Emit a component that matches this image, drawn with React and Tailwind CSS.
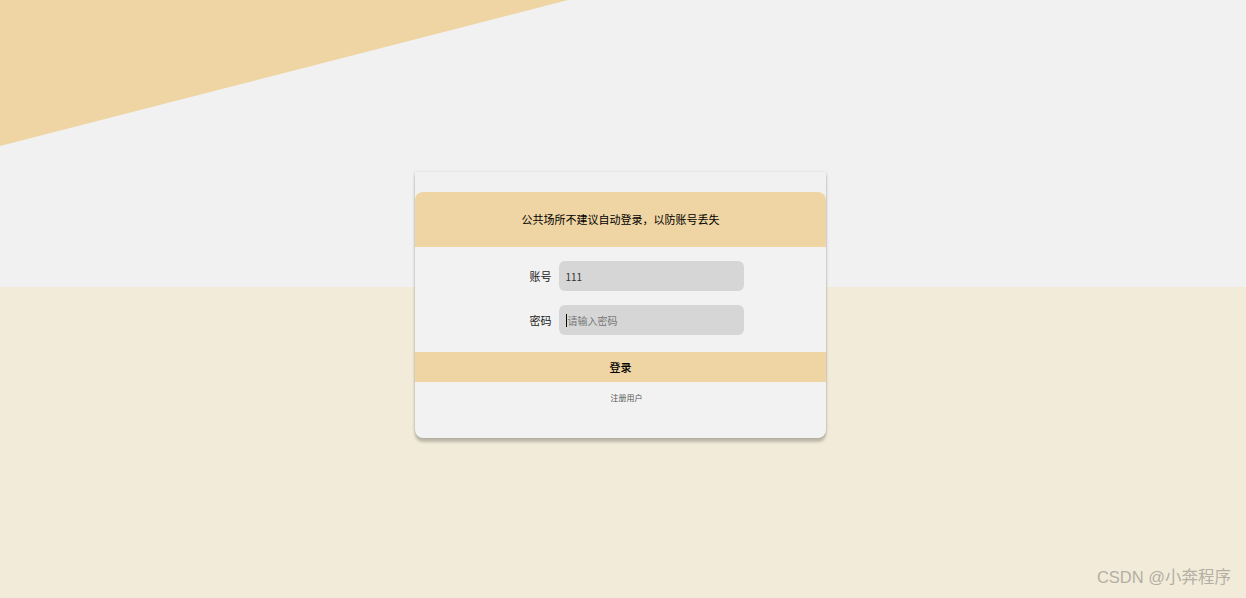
export default function App() {
    return (
        <div
            className="relative w-full h-[598px] overflow-hidden bg-[linear-gradient(to_bottom,#f1f1f1_287px,#f2ebd9_287px)]"
            style={{ fontFamily: '"Noto Sans CJK SC", "Liberation Sans", sans-serif' }}
        >
            {/* top-left wedge */}
            <svg className="absolute left-0 top-0" width="570" height="148" viewBox="0 0 570 148">
                <polygon points="0,0 568,0 0,146" fill="#efd5a3" />
            </svg>

            <div className="relative pt-[172px] pl-[415px]">
                <div className="w-[411px] h-[266px] bg-[#f2f2f2] rounded-b-lg shadow-[0_4px_3px_rgba(0,0,0,0.22),1px_0_2px_rgba(0,0,0,0.08),-1px_0_2px_rgba(0,0,0,0.08)]">
                    <div className="h-[20px] bg-[#f1f1f1]" />
                    <div className="h-[55px] bg-[#efd5a3] rounded-t-lg flex items-center justify-center text-[11px] text-black">
                        公共场所不建议自动登录，以防账号丢失
                    </div>

                    <div className="flex flex-col items-center gap-[14px] pt-[14px] pl-[24px]">
                        <div className="flex items-center gap-[7px]">
                            <span className="w-[30px] text-right text-[11px] text-[#222]">账号</span>
                            <div className="w-[185px] h-[30px] rounded-md bg-[#d6d6d6] flex items-center px-[7px] text-[10px] text-[#333]">111</div>
                        </div>
                        <div className="flex items-center gap-[7px]">
                            <span className="w-[30px] text-right text-[11px] text-[#222]">密码</span>
                            <div className="w-[185px] h-[30px] rounded-md bg-[#d6d6d6] flex items-center px-[7px] text-[10px] text-[#777]">
                                <span className="w-px h-[13px] bg-black mr-px" />
                                请输入密码
                            </div>
                        </div>
                    </div>

                    <div className="mt-[17px] h-[30px] bg-[#efd5a3] flex items-center justify-center text-[11px] font-medium text-black">
                        登录
                    </div>
                    <div className="pt-[10px] pl-[12px] text-center text-[8px] text-[#555]">注册用户</div>
                </div>
            </div>

            <div className="absolute right-[15px] bottom-[8px] text-[16.5px] text-[#b3afa4]" style={{ fontFamily: '"Liberation Sans", "Noto Sans CJK SC", sans-serif' }}>
                CSDN @小奔程序
            </div>
        </div>
    );
}
